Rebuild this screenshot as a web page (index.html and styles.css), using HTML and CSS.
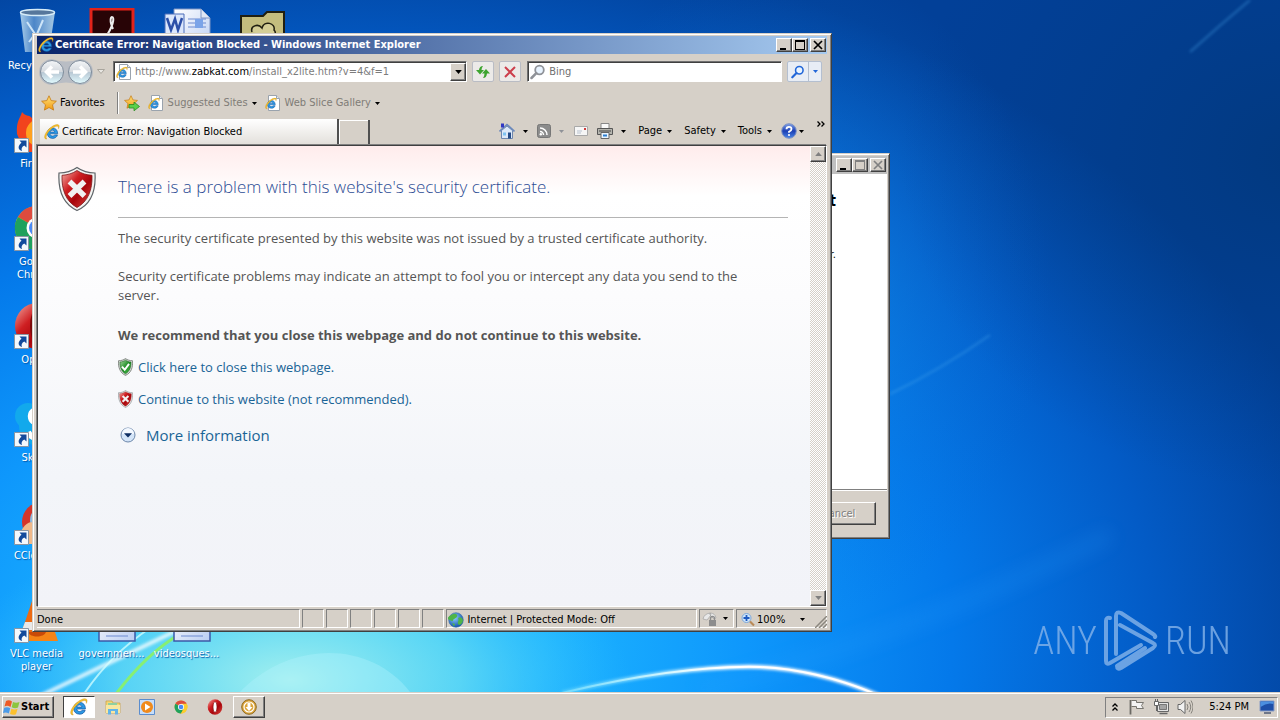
FILE: index.html
```html
<!DOCTYPE html>
<html lang="en">
<head>
<meta charset="utf-8">
<title>Certificate Error: Navigation Blocked</title>
<link rel="stylesheet" href="styles.css">
</head>
<body>
<svg class="defs" aria-hidden="true">
  <defs>
    <linearGradient id="gRed" x1="0" y1="0" x2="1" y2="1"><stop offset="0" stop-color="#f3b0a8"/><stop offset=".35" stop-color="#cf1f22"/><stop offset=".6" stop-color="#a8060c"/><stop offset="1" stop-color="#e04840"/></linearGradient>
    <linearGradient id="gGreen" x1="0" y1="0" x2="1" y2="1"><stop offset="0" stop-color="#a9dba0"/><stop offset=".5" stop-color="#1f8e28"/><stop offset="1" stop-color="#4cbf4a"/></linearGradient>
    <linearGradient id="gNav" x1="0" y1="0" x2="0" y2="1"><stop offset="0" stop-color="#f4f6f8"/><stop offset=".48" stop-color="#d5dadf"/><stop offset=".52" stop-color="#b9c8d4"/><stop offset="1" stop-color="#e2fbff"/></linearGradient>
    <linearGradient id="gBlue" x1="0" y1="0" x2="0" y2="1"><stop offset="0" stop-color="#7fa0e8"/><stop offset=".5" stop-color="#1c3fb4"/><stop offset="1" stop-color="#4b86e6"/></linearGradient>
    <linearGradient id="gStar" x1="0" y1="0" x2="0" y2="1"><stop offset="0" stop-color="#ffe27a"/><stop offset="1" stop-color="#f29a10"/></linearGradient>
    <linearGradient id="gBin" x1="0" y1="0" x2="1" y2="0"><stop offset="0" stop-color="#a9cdea"/><stop offset=".4" stop-color="#4c86c8"/><stop offset="1" stop-color="#a5c8e4"/></linearGradient>
    <linearGradient id="gDoc" x1="0" y1="0" x2="1" y2="1"><stop offset="0" stop-color="#fff"/><stop offset="1" stop-color="#b9cdf2"/></linearGradient>
    <radialGradient id="gGlobe" cx=".4" cy=".35" r=".7"><stop offset="0" stop-color="#8fd0ff"/><stop offset="1" stop-color="#0b4aa8"/></radialGradient>
  </defs>
  <symbol id="ie" viewBox="0 0 16 16">
    <path d="M13.700 9.800H6c.1 1.300 1.100 2.200 2.600 2.200 1 0 1.700-.4 2.200-1.100h2.700c-.7 2.300-2.500 3.500-4.900 3.500-3.200 0-5.300-2.100-5.300-5.200 0-3 2.200-5.300 5.200-5.300 3.200 0 5.300 2.400 5.200 5.900zM6.100 8h4.500c-.2-1.100-1-1.800-2.200-1.800S6.400 6.900 6.100 8z" fill="#2a98e4" stroke="#0c4f9c" stroke-width=".6"/>
    <path d="M3 15C.2 15.500-.2 12.500 2 8.800 4.500 4.600 9.500.9 12.800.6c2.500-.2 3 1.600 1.700 4.200.2-1.900-.4-2.800-2-2.500C9.300 2.900 5 6.600 3.100 10.200c-1.200 2.300-1.400 4.100-.1 4.800z" fill="#f6c02c" stroke="#b9820c" stroke-width=".3"/>
  </symbol>
  <symbol id="iepage" viewBox="0 0 16 16">
    <path d="M3.500.5h8l3 3v12h-11z" fill="#fff" stroke="#9aa3ad"/><path d="M11.500.5v3h3" fill="#e4e8ec" stroke="#9aa3ad"/>
    <use href="#ie" x="0" y="2.500" width="12" height="12"/>
  </symbol>
  <symbol id="shieldx" viewBox="0 0 38 46">
    <path d="M19 1.500C14 5 8 7 1 7c-1 17 4 31 18 37.500C34 38 38 24 37 7 30 7 24 5 19 1.500z" fill="#f4f4f2" stroke="#5e6468" stroke-width="1.200"/>
    <path d="M19 4.500C14.500 7.500 9.500 9 4 9.300 3.500 24 8 35.500 19 41.500 30 35.500 34.500 24 34 9.300 28.500 9 23.500 7.500 19 4.500z" fill="url(#gRed)" stroke="#7c1416" stroke-width=".8"/>
    <path d="M11.500 15.500l15 14.500M26.500 15.500l-15 14.500" stroke="#f1f1f1" stroke-width="5.500"/>
  </symbol>
  <symbol id="shieldok" viewBox="0 0 38 46">
    <path d="M19 1.500C14 5 8 7 1 7c-1 17 4 31 18 37.500C34 38 38 24 37 7 30 7 24 5 19 1.500z" fill="#d8ddd8" stroke="#6b716b" stroke-width="2"/>
    <path d="M19 5.500C14.500 8.500 10 10 5 10.300 4.500 24 9 34.500 19 40.500 29 34.500 33.500 24 33 10.300 28 10 23.500 8.500 19 5.500z" fill="url(#gGreen)" stroke="#17601d" stroke-width="1.500"/>
    <path d="M10 22l7 8 11-15" fill="none" stroke="#fff" stroke-width="5"/>
  </symbol>
  <symbol id="star" viewBox="0 0 16 16"><path d="M8 .8l2.200 4.800 5.200.6-3.900 3.600 1.100 5.300L8 12.500l-4.600 2.600 1.100-5.300L.6 6.200l5.200-.6z" fill="url(#gStar)" stroke="#c77a10" stroke-width=".8"/></symbol>
  <symbol id="down" viewBox="0 0 5 3"><path d="M0 0h5L2.500 3z" fill="currentColor"/></symbol>
  <symbol id="min" viewBox="0 0 12 10"><path d="M2 8h6v2H2z" fill="currentColor"/></symbol>
  <symbol id="max" viewBox="0 0 12 10"><path d="M1 0h10v10H1zM2 2v7h8V2z" fill="currentColor" fill-rule="evenodd"/></symbol>
  <symbol id="close" viewBox="0 0 12 10"><path d="M2 1l8 8M10 1L2 9" stroke="currentColor" stroke-width="1.700"/></symbol>
  <symbol id="chrome" viewBox="0 0 48 48">
    <circle cx="24" cy="24" r="22" fill="#f8c51c"/>
    <path d="M24 24L4.900 13A22 22 0 0 1 43.100 13z" fill="#dd4b3e"/>
    <path d="M4.900 13A22 22 0 0 0 24 46l9.500-16.500L24 24z" fill="#1fa15d"/>
    <path d="M24 13h19.100A22 22 0 0 1 24 46l9.500-16.500z" fill="#fccd2e"/>
    <circle cx="24" cy="24" r="10.500" fill="#fff"/><circle cx="24" cy="24" r="8" fill="#4a8af4"/>
  </symbol>
  <symbol id="opera" viewBox="0 0 48 48"><ellipse cx="24" cy="24" rx="22" ry="23" fill="url(#gRed)"/><ellipse cx="24" cy="24" rx="6" ry="16" fill="#fff" stroke="#7a0a0a" stroke-width="2"/></symbol>
  <symbol id="shortcut" viewBox="0 0 15 15"><path d="M.5.5h14v14H.5z" fill="#f4f8fc" stroke="#8a96a4"/><path d="M5.500 2.500h7v7L10.300 7.400C7.800 8.800 7 10.500 8 13 4.300 12 3 8.500 7.500 4.800z" fill="#124a9c"/></symbol>
  <symbol id="lens" viewBox="0 0 16 16"><circle cx="9.500" cy="6" r="4.300" fill="#e9f4ff" stroke="currentColor" stroke-width="1.800"/><path d="M6.300 9.200L1.500 14" stroke="currentColor" stroke-width="2.500" stroke-linecap="round"/></symbol>
</svg>

<main class="desktop">
  <svg class="wallpaper" viewBox="0 0 1280 692" preserveAspectRatio="none" aria-hidden="true">
    <defs>
      <radialGradient id="w0" gradientUnits="userSpaceOnUse" cx="0" cy="0" r="1" gradientTransform="translate(340 640) scale(1020 720)">
        <stop offset="0" stop-color="#2cc4fb"/><stop offset=".2" stop-color="#1cb4ff"/><stop offset=".4" stop-color="#0e97fc"/><stop offset=".6" stop-color="#0479ea"/><stop offset=".8" stop-color="#035bc6"/><stop offset="1" stop-color="#024098"/>
      </radialGradient>
      <radialGradient id="w1" gradientUnits="userSpaceOnUse" cx="0" cy="0" r="1" gradientTransform="translate(290 680) scale(340 160)"><stop offset="0" stop-color="#a4f0ee"/><stop offset=".5" stop-color="#6fe0f2" stop-opacity=".7"/><stop offset="1" stop-color="#30c0ff" stop-opacity="0"/></radialGradient>
      <radialGradient id="w2" gradientUnits="userSpaceOnUse" cx="0" cy="0" r="1" gradientTransform="translate(1300 160) scale(400 330)"><stop offset="0" stop-color="#023572" stop-opacity=".65"/><stop offset="1" stop-color="#023a80" stop-opacity="0"/></radialGradient>
      <radialGradient id="w3" gradientUnits="userSpaceOnUse" cx="0" cy="0" r="1" gradientTransform="translate(790 290) scale(260 330)"><stop offset="0" stop-color="#1894ea" stop-opacity=".6"/><stop offset="1" stop-color="#0a70d8" stop-opacity="0"/></radialGradient>
      <linearGradient id="w4"><stop offset="0" stop-color="#bff" stop-opacity=".3"/><stop offset=".5" stop-color="#fff"/><stop offset="1" stop-color="#fff"/></linearGradient>
      <filter id="soft" x="-10%" y="-30%" width="120%" height="160%"><feGaussianBlur stdDeviation="1.500"/></filter>
      <filter id="haze" x="-10%" y="-30%" width="120%" height="160%"><feGaussianBlur stdDeviation="9"/></filter>
    </defs>
    <path d="M0 0h1280v692H0z" fill="url(#w0)"/>
    <path d="M0 0h1280v692H0z" fill="url(#w3)"/>
    <path d="M0 0h1280v692H0z" fill="url(#w2)"/>
    <path d="M0 0h1280v692H0z" fill="url(#w1)"/>
    <path d="M240 692C290 640 370 640 410 692z" fill="#b5f4ff" opacity=".35"/>
    <g fill="none">
      <path d="M700 690Q900 640 1110 535" stroke="#35a5ff" stroke-width="12" opacity=".2" filter="url(#haze)"/>
      <path d="M890 394Q940 370 990 335M1190 52Q1220 25 1250 0" stroke="#4ba9ee" stroke-width="2" opacity=".4" filter="url(#soft)"/>
      <path d="M40 696L182 628" stroke="#fff" stroke-width="4" opacity=".8" filter="url(#soft)"/>
      <path d="M84 694Q110 655 150 628" stroke="#d4ffff" stroke-width="2" opacity=".75"/>
      <path d="M116 694Q146 654 180 634" stroke="#8cf265" stroke-width="3" opacity=".9"/>
      <path d="M562 693Q680 665 760 667Q820 670 880 696" stroke="url(#w4)" stroke-width="4" filter="url(#soft)"/>
      <path d="M562 693Q680 665 760 667Q820 670 880 696" stroke="url(#w4)" stroke-width="2"/>
    </g>
  </svg>

  <ul class="icons">
    <li class="shortcut c1 r1"><svg viewBox="0 0 48 48"><path d="M7 4l5 40h24l6-40z" fill="url(#gBin)"/><ellipse cx="24.500" cy="4.500" rx="17" ry="3" fill="#56779c" stroke="#d6ecf8" stroke-width="1.500"/><path d="M14 14l8 12-6 8M30 12l-6 14 8 6" stroke="#cde5f8" stroke-width="2" fill="none"/></svg><span>Recycle Bin</span></li>
    <li class="shortcut c2 r1"><svg viewBox="0 0 48 48"><path d="M3 1h42v45H3z" fill="#280406" stroke="#e2231a" stroke-width="3"/><path d="M25 21c-4-9-2-12-1-12 3 0 1 10-7 21" stroke="#eee" stroke-width="2" fill="none"/></svg></li>
    <li class="shortcut c3 r1"><svg viewBox="0 0 48 48"><path d="M11 1h27l9 9v36H11z" fill="url(#gDoc)" stroke="#7d94c4"/><path d="M38 1v9h9" fill="#dfe7f5" stroke="#7d94c4"/><path d="M25 11h18M25 15h18M25 19h18" stroke="#6c8ad0"/><path d="M32 11h8v9h-8z" fill="#7ba4e8"/><path d="M2 6h19v20H2z" fill="#dce7fb" stroke="#4a6cb8"/><path d="M4 10l4 12 4-11 3 11 4-12" fill="none" stroke="#2c4fa8" stroke-width="2.500"/></svg></li>
    <li class="shortcut c4 r1"><svg viewBox="0 0 48 48"><path d="M3 8h22l4-4h17v42H3z" fill="#c3bd7e" stroke="#201f10" stroke-width="2"/><path d="M14 24c-2-6 6-9 10-4 2-8 14-5 12 2 3 3 0 8-4 6" fill="#d4ce96" stroke="#201f10" stroke-width="1.500"/></svg></li>
    <li class="shortcut c1 r2"><svg viewBox="0 0 48 48"><path d="M4 28C3 15 7 13 9 6c4 5 6 2 10 6h25v34H12z" fill="#f2431d"/><circle cx="27" cy="27" r="14" fill="#ffa21f"/></svg><svg class="arrow"><use href="#shortcut"/></svg><span>Firefox</span></li>
    <li class="shortcut c1 r3"><svg><use href="#chrome"/></svg><svg class="arrow"><use href="#shortcut"/></svg><span>Google Chrome</span></li>
    <li class="shortcut c1 r4"><svg><use href="#opera"/></svg><svg class="arrow"><use href="#shortcut"/></svg><span>Opera</span></li>
    <li class="shortcut c1 r5"><svg viewBox="0 0 48 48"><circle cx="15" cy="16" r="13" fill="#12a9ec"/><circle cx="26" cy="26" r="20" fill="#12a9ec"/><path d="M28 10c-8-1-11 3-10 8s8 6 14 8M15 32c3 7 12 7 18 4" fill="none" stroke="#fff" stroke-width="6"/></svg><svg class="arrow"><use href="#shortcut"/></svg><span>Skype</span></li>
    <li class="shortcut c1 r6"><svg viewBox="0 0 48 48"><circle cx="29" cy="24" r="20" fill="#d4352a"/><circle cx="30" cy="22" r="13" fill="#8bbbe4"/><path d="M4 46c4-20 14-28 24-16l6 16z" fill="#f0b98a"/></svg><svg class="arrow"><use href="#shortcut"/></svg><span>CCleaner</span></li>
    <li class="shortcut c1 r7"><svg viewBox="0 0 48 48"><path d="M20 2h8l12 36H8z" fill="#ec6a12"/><path d="M12 26h24l3 8H9z" fill="#e8e8e8"/><path d="M6 36h36l3 9H3z" fill="#f58416"/><path d="M15 36c2 6 16 6 18 0z" fill="#c94a08"/></svg><svg class="arrow"><use href="#shortcut"/></svg><span>VLC media player</span></li>
    <li class="shortcut c2 r7"><svg viewBox="0 0 48 48"><path d="M11 1h36v44H11z" fill="url(#gDoc)" stroke="#3b5aa8" stroke-width="1.500"/><path d="M18 40h22" stroke="#6c8ad0"/></svg><span>governmen...</span></li>
    <li class="shortcut c3 r7"><svg viewBox="0 0 48 48"><path d="M11 1h36v44H11z" fill="url(#gDoc)" stroke="#3b5aa8" stroke-width="1.500"/><path d="M18 40h22" stroke="#6c8ad0"/></svg><span>videosques...</span></li>
  </ul>

  <div class="watermark">
    <span>ANY</span>
    <svg viewBox="0 0 56 62" aria-hidden="true"><g fill="none" stroke="#86b4ea" stroke-width="4" stroke-linejoin="round" stroke-linecap="round"><path d="M7 8Q3 7 3 11v40q0 4 4 2l31-18"/><path d="M13 44V6q0-5 5-3l32 21q3 2 2 3"/><path d="M17 15l33 18q4 2 0 5L18 58q-4 2-4-2l28-18"/></g></svg>
    <span>RUN</span>
  </div>

  <section class="window dialog" aria-label="Setup">
    <header class="titlebar idle">
      <span class="title"></span>
      <button class="cap" aria-label="Minimize"><svg><use href="#min"/></svg></button>
      <button class="cap dim" aria-label="Maximize"><svg><use href="#max"/></svg></button>
      <button class="cap gap dim" aria-label="Close"><svg><use href="#close"/></svg></button>
    </header>
    <div class="dialog-body"><strong>t</strong><span>r.</span></div>
    <footer><button class="cancel" disabled>Cancel</button></footer>
  </section>

  <section class="window browser" aria-label="Internet Explorer">
    <header class="titlebar">
      <svg class="i16"><use href="#ie"/></svg>
      <h1 class="title">Certificate Error: Navigation Blocked - Windows Internet Explorer</h1>
      <button class="cap" aria-label="Minimize"><svg><use href="#min"/></svg></button>
      <button class="cap" aria-label="Maximize"><svg><use href="#max"/></svg></button>
      <button class="cap gap" aria-label="Close"><svg><use href="#close"/></svg></button>
    </header>

    <div class="navrow">
      <svg class="backfwd" viewBox="0 0 56 28" aria-hidden="true">
        <path d="M14 1Q28 6 42 1a13 13 0 0 1 0 26Q28 22 14 27A13 13 0 0 1 14 1z" fill="#b9bdc4"/>
        <g fill="url(#gNav)" stroke="#7e8b9a"><circle cx="14" cy="14" r="11.500"/><circle cx="42" cy="14" r="11.500"/></g>
        <path d="M21 14H9M14 8.500L8.500 14l5.500 5.500M35 14h12M42 8.500l5.500 5.500-5.500 5.500" fill="none" stroke="#fff" stroke-width="3.500"/>
      </svg>
      <svg class="recent" viewBox="0 0 8 5"><path d="M.5.5h7L4 4.500z" fill="#e8e6e2" stroke="#a9a59d"/></svg>
      <div class="field address">
        <svg class="i16"><use href="#iepage"/></svg>
        <div class="url" role="textbox" aria-label="Address">http://www.<b>zabkat.com</b>/install_x2lite.htm?v=4&amp;f=1</div>
        <button class="drop" aria-label="Show addresses"><svg class="down"><use href="#down"/></svg></button>
      </div>
      <button class="tool" aria-label="Refresh"><svg viewBox="0 0 16 16"><path d="M8 2Q4.500 2 4 6H1l4 4.500L9 6H6.500Q6.500 4 8 2zM8 14q3.500 0 4-4.500h3L11 5 7 9.500h2.500Q9.500 12 8 14z" fill="#3da42f"/></svg></button>
      <button class="tool" aria-label="Stop"><svg viewBox="0 0 16 16"><path d="M3 3l10 10M13 3L3 13" stroke="#cc3f4c" stroke-width="2"/></svg></button>
      <div class="field search">
        <svg class="i16 grey"><use href="#lens"/></svg>
        <input type="text" placeholder="Bing" aria-label="Search Bing">
      </div>
      <div class="go"><button aria-label="Search"><svg class="i14"><use href="#lens"/></svg></button><button class="more" aria-label="Search options"><svg class="down"><use href="#down"/></svg></button></div>
    </div>

    <nav class="favrow">
      <button class="fav"><svg class="i16"><use href="#star"/></svg>Favorites</button>
      <span class="rule"></span>
      <button aria-label="Add to Favorites"><svg class="i16" viewBox="0 0 16 16"><use href="#star" width="14" height="14"/><path d="M5 9.500h5V7l5.500 4.500L10 15.800V13H5z" fill="#5ad04a" stroke="#2a8a22" stroke-width=".8"/></svg></button>
      <button class="faint sites"><svg class="i16"><use href="#iepage"/></svg>Suggested Sites<svg class="down"><use href="#down"/></svg></button>
      <button class="faint"><svg class="i16"><use href="#iepage"/></svg>Web Slice Gallery<svg class="down"><use href="#down"/></svg></button>
    </nav>

    <div class="tabrow">
      <button class="tab"><svg class="i16"><use href="#ie"/></svg>Certificate Error: Navigation Blocked</button>
      <button class="newtab" aria-label="New Tab"></button>
      <div class="commands">
        <button aria-label="Home"><svg class="i16" viewBox="0 0 16 16"><path d="M2.500 7.500v8h11v-8L8 3z" fill="#dce8f8" stroke="#6f87ae"/><path d="M.5 8.500L8 1.500l7.500 7" fill="none" stroke="#6b88bb" stroke-width="1.600"/><path d="M9 9.500h3v6H9z" fill="#254a86"/><path d="M4 9.500h3v3H4z" fill="#7fc2f0"/><path d="M2 .5h3v4H2z" fill="#3037c4"/></svg><svg class="down"><use href="#down"/></svg></button>
        <button class="grey" aria-label="Feeds"><svg class="i14" viewBox="0 0 14 14"><rect x=".5" y=".5" width="13" height="13" rx="2" fill="#8c8c8c" stroke="#777"/><path d="M3 7.500A3.500 3.500 0 0 1 6.500 11M3 4a7 7 0 0 1 7 7" fill="none" stroke="#fff" stroke-width="1.500"/><circle cx="3.800" cy="10.200" r="1.200" fill="#fff"/></svg><svg class="down"><use href="#down"/></svg></button>
        <button class="mail" aria-label="Read mail"><svg class="i14" viewBox="0 0 14 14"><path d="M.5 2.500h13v9H.5z" fill="#f6f6f6" stroke="#a9a9a9"/><path d="M10 4h2v2h-2z" fill="#cf3a3a"/><path d="M3 7h5M3 9h4" stroke="#b9c3d0"/></svg></button>
        <button class="print" aria-label="Print"><svg class="i16" viewBox="0 0 16 16"><path d="M4 .5h8v5H4z" fill="#fafafa" stroke="#888"/><path d="M.5 5.500h15v6H.5z" fill="#b4b4ae" stroke="#565656"/><path d="M2 8h12" stroke="#444"/><path d="M4 9.500h8v6H4z" fill="#e8f4ff" stroke="#666"/><path d="M6 12.500h4" stroke="#2c7ed0" stroke-width="2"/></svg><svg class="down"><use href="#down"/></svg></button>
        <button class="word">Page<svg class="down"><use href="#down"/></svg></button>
        <button class="word">Safety<svg class="down"><use href="#down"/></svg></button>
        <button class="word">Tools<svg class="down"><use href="#down"/></svg></button>
        <button class="help" aria-label="Help"><svg class="i16" viewBox="0 0 16 16"><circle cx="8" cy="8" r="7.300" fill="url(#gBlue)" stroke="#7f93c4"/><path d="M5.500 6.200Q5.500 3.800 8 3.800t2.500 2.200Q10.500 7.500 8 8.800v1" fill="none" stroke="#fff" stroke-width="1.800"/><circle cx="8" cy="12" r="1.100" fill="#fff"/></svg><svg class="down"><use href="#down"/></svg></button>
        <button class="chev" aria-label="More commands"><svg viewBox="0 0 8 6"><path d="M.5.500L3 3 .5 5.500M4.500.500L7 3 4.500 5.500" fill="none" stroke="#000" stroke-width="1.300"/></svg></button>
      </div>
    </div>

    <div class="viewport">
      <article class="page">
        <svg class="bigshield"><use href="#shieldx"/></svg>
        <div class="copy">
          <h2>There is a problem with this website's security certificate.</h2>
          <p>The security certificate presented by this website was not issued by a trusted certificate authority.</p>
          <p>Security certificate problems may indicate an attempt to fool you or intercept any data you send to the server.</p>
          <p class="advice">We recommend that you close this webpage and do not continue to this website.</p>
          <a class="choice" href="#"><svg><use href="#shieldok"/></svg>Click here to close this webpage.</a>
          <a class="choice" href="#"><svg><use href="#shieldx"/></svg>Continue to this website (not recommended).</a>
          <a class="choice info" href="#"><svg viewBox="0 0 16 16"><circle cx="8" cy="8" r="7" fill="#d3e4f8" stroke="#6d87aa"/><path d="M2 7a6 6 0 0 1 12 0z" fill="#f3f8ff"/><path d="M4 6.200h8L8 10.500z" fill="#0c2c62"/></svg>More information</a>
        </div>
      </article>
      <div class="scrollbar" aria-hidden="true">
        <button tabindex="-1"><svg class="down up"><use href="#down"/></svg></button>
        <button tabindex="-1"><svg class="down"><use href="#down"/></svg></button>
      </div>
    </div>

    <footer class="status">
      <span class="cell done">Done</span>
      <span class="cell slot"></span><span class="cell slot"></span><span class="cell slot"></span><span class="cell slot"></span><span class="cell slot"></span><span class="cell slot"></span>
      <span class="cell zone"><svg class="i16" viewBox="0 0 16 16"><circle cx="8" cy="8" r="7.300" fill="url(#gGlobe)" stroke="#3d6fa8" stroke-width=".6"/><path d="M4 2.500Q8 1 9 3T7 6.500 5 9 1.500 8 4 2.500zM10 6q3-2 4.500 1T12 13Q9 13 10 10T10 6zM4 11l3 1-1 2.500z" fill="#4fb548"/></svg>Internet | Protected Mode: Off</span>
      <span class="cell lock"><svg class="i16" viewBox="0 0 16 16"><path d="M1 8Q2 3 8 2l1 2-4 5zM8 2q5 0 6 5l-2 1-4-4z" fill="#e8e8e8" stroke="#999" stroke-width=".6"/><path d="M7 9h7v6H7z" fill="#8d8d8d"/><path d="M8.500 9V7.500a2 2 0 0 1 4 0V9" fill="none" stroke="#8d8d8d" stroke-width="1.300"/></svg><svg class="down"><use href="#down"/></svg></span>
      <button class="cell zoom"><svg class="i14" viewBox="0 0 14 14"><circle cx="5.500" cy="5" r="4.500" fill="#cfe6fb" stroke="#7da7d8"/><path d="M5.500 2v6M2.500 5h6" stroke="#1f5ac0" stroke-width="1.800"/><path d="M9 8.500l4 4" stroke="#b98a58" stroke-width="2.200"/></svg>100%<svg class="down"><use href="#down"/></svg></button>
      <svg class="grip" viewBox="0 0 12 12"><path d="M0 12L12 0M4 12l8-8M8 12l4-4" stroke="#8a867e" stroke-width="1.500"/></svg>
    </footer>
  </section>
</main>

<footer class="taskbar">
  <button class="start"><svg class="i18" viewBox="0 0 18 16"><path d="M3 2q3-1.500 6 .5L7.500 8Q4.500 6 1.500 7.500z" fill="#ee5a24"/><path d="M10 3q3 1.500 6.500 0L15 8.500q-3 1.500-6.300-.2z" fill="#8cc63e"/><path d="M1.200 8.800q3-1.500 6 .4L5.800 14.500Q3 12.700 0 14z" fill="#4b9be8"/><path d="M8.400 9.700q3 1.500 6.200 0L13 15.200q-3 1.300-6-.2z" fill="#fcc12d"/></svg>Start</button>
  <div class="tasks">
    <button class="task active" aria-label="Internet Explorer"><svg class="i18"><use href="#ie"/></svg></button>
    <button class="task" aria-label="Explorer"><svg class="i16" viewBox="0 0 16 16"><path d="M1 2h6l1 2h7v10H1z" fill="#f3d675" stroke="#c79f3c" stroke-width=".7"/><path d="M3 4h9v3H3z" fill="#8fd0a0"/><path d="M1 6h14v8H1z" fill="#f8e7a0"/><path d="M3 15.500V10h10v5.500h-3V12H6v3.500z" fill="#62b4e8"/></svg></button>
    <button class="task" aria-label="Media Player"><svg class="i16" viewBox="0 0 16 16"><path d="M.5.500h15v15H.5z" fill="#c7defa" stroke="#5b8dce"/><circle cx="8" cy="8" r="6" fill="#f08a1c"/><path d="M6 4.500L11.500 8 6 11.500z" fill="#fff"/></svg></button>
    <button class="task" aria-label="Chrome"><svg class="i14"><use href="#chrome"/></svg></button>
    <button class="task" aria-label="Opera"><svg class="i16"><use href="#opera"/></svg></button>
    <button class="task raised" aria-label="Installer"><svg class="i16" viewBox="0 0 16 16"><circle cx="8" cy="8" r="7.300" fill="#dca53a" stroke="#8f6a20"/><circle cx="8" cy="8" r="5" fill="none" stroke="#fff" stroke-width="1.200"/><path d="M6.500 4h3v4h2L8 12 4.500 8h2z" fill="#fff"/></svg></button>
  </div>
  <div class="tray">
    <svg class="hide" viewBox="0 0 6 8"><path d="M.5 3.500L3 1l2.500 2.500M.5 7.500L3 5l2.500 2.500" fill="none" stroke="#000" stroke-width="1.300"/></svg>
    <svg class="i16" viewBox="0 0 16 16"><path d="M2.500 1.500h5v2h7l-2 3 2 3H7.500v-2h-5" fill="#f4f4f4" stroke="#77756f"/><path d="M1.500 1v14.500" stroke="#6b6964" stroke-width="1.800"/></svg>
    <svg class="i16" viewBox="0 0 16 16"><path d="M4.500 3.500h11v9h-11z" fill="#e4e4e4" stroke="#666"/><path d="M6.500 5.500h7v5h-7z" fill="#a4a4a4" stroke="#777"/><path d="M6.500 14.500h8" stroke="#666" stroke-width="1.500"/><path d="M1.500 2.500h4v4h-4zM2.500 0v2M4.500 0v2M3.500 7v5" fill="#fff" stroke="#666"/></svg>
    <svg class="i16" viewBox="0 0 16 16"><path d="M1 5.500h2.500L8 1.500v13l-4.500-4H1z" fill="#f2f2f2" stroke="#666"/><path d="M10 5q2 3 0 6M12 3q3.500 5 0 10M14 1.500q4 6.500 0 13" fill="none" stroke="#85827c"/></svg>
    <time>5:24 PM</time>
    <svg class="i16" viewBox="0 0 16 16"><path d="M1 2h14v10H1z" fill="#1d4fa8" stroke="#8a9cc4"/><path d="M1.500 8Q8 3 14.500 5V2.500h-13z" fill="#4b8fe0"/><path d="M5 14h7" stroke="#4d5a74" stroke-width="1.500"/></svg>
  </div>
</footer>
</body>
</html>
```
FILE: styles.css
```css
* { box-sizing: border-box; }
html, body { height: 100%; margin: 0; }
body {
  display: flex;
  flex-direction: column;
  overflow: hidden;
  font: 11px/14px "DejaVu Sans Condensed", "DejaVu Sans", sans-serif;
  color: #000;
  background: #0a6cd0;
}
button, input { font: inherit; color: inherit; }
button { display: flex; align-items: center; padding: 0; border: 0; background: none; white-space: nowrap; }
svg { display: block; flex: none; }
h1, h2, p, ul { margin: 0; padding: 0; }
.defs { position: absolute; width: 0; height: 0; }
.i14 { width: 14px; height: 14px; }
.i16 { width: 16px; height: 16px; }
.i18 { width: 18px; height: 18px; }
.down { width: 5px; height: 3px; }
.up { transform: rotate(180deg); }
.grey { color: #8f9298; }

/* Desktop */
.desktop { position: relative; flex: 1; min-height: 0; overflow: hidden; }
.wallpaper { position: absolute; inset: 0; width: 100%; height: 100%; }
.icons {
  position: absolute;
  top: 8px;
  left: -1px;
  display: grid;
  grid-template-columns: repeat(4, 75px);
  grid-template-rows: repeat(7, 98px);
  list-style: none;
  color: #fff;
}
.shortcut { position: relative; display: flex; flex-direction: column; align-items: center; gap: 3px; text-align: center; line-height: 13px; text-shadow: 1px 1px 1px #0457a8; }
.shortcut > svg { width: 48px; height: 48px; }
.shortcut > .arrow { position: absolute; left: 15px; top: 32px; width: 15px; height: 15px; }
.c1 { grid-column: 1; } .c2 { grid-column: 2; } .c3 { grid-column: 3; } .c4 { grid-column: 4; }
.r1 { grid-row: 1; } .r2 { grid-row: 2; } .r3 { grid-row: 3; } .r4 { grid-row: 4; }
.r5 { grid-row: 5; } .r6 { grid-row: 6; } .r7 { grid-row: 7; }
.shortcut span { max-width: 70px; }

.watermark {
  position: absolute;
  right: 49px;
  bottom: 20px;
  display: flex;
  align-items: center;
  gap: 6px;
  font: 300 38px/62px "Roboto Condensed", Roboto, sans-serif;
  color: #86b4ea;
  opacity: .8;
}
.watermark svg { width: 56px; height: 62px; }

/* Windows */
.window {
  position: absolute;
  display: flex;
  flex-direction: column;
  padding: 2px;
  background: #d6d0c8;
  border: 1px solid;
  border-color: #d6d0c8 #404040 #404040 #d6d0c8;
  box-shadow: inset 1px 1px #fff, inset -1px -1px #808080;
}
.titlebar { display: flex; align-items: center; height: 18px; padding: 0 1px; color: #fff; background: linear-gradient(90deg, #0a246a, #a6caf0); }
.titlebar.idle { background: #c0c0c0; }
.title { flex: 1; margin-left: 1px; font: bold 11px/18px "DejaVu Sans Condensed", sans-serif; white-space: nowrap; overflow: hidden; }
.cap {
  justify-content: center;
  width: 16px;
  height: 14px;
  color: #000;
  background: #d6d0c8;
  border: 1px solid;
  border-color: #fff #404040 #404040 #fff;
  box-shadow: inset -1px -1px #808080;
}
.cap svg { width: 12px; height: 10px; }
.cap.gap { margin-left: 2px; }
.cap.dim { color: #808080; }

.dialog { left: 480px; top: 153px; width: 410px; height: 386px; }
.dialog-body { flex: 1; display: flex; flex-direction: column; align-items: flex-end; gap: 38px; padding: 18px 51px; background: #fff; border-bottom: 1px solid #808080; }
.dialog-body strong { font-size: 15px; line-height: 18px; }
.dialog footer { display: flex; justify-content: flex-end; padding: 11px 11px; height: 46px; border-top: 1px solid #fff; }
.cancel { justify-content: center; width: 75px; height: 23px; color: #808080; text-shadow: 1px 1px #fff; border: 1px solid; border-color: #fff #404040 #404040 #fff; box-shadow: inset -1px -1px #808080; }

.browser { left: 32px; top: 33px; width: 800px; height: 599px; padding: 2px 4px; }

.navrow { display: flex; align-items: center; height: 34px; padding: 1px 5px 0 1px; }
.backfwd { width: 56px; height: 28px; }
.recent { width: 8px; height: 5px; margin: 0 8px 0 3px; }
.field { display: flex; align-items: center; height: 21px; background: #fff; border: 1px solid; border-color: #707070 #fff #fff #707070; box-shadow: inset 1px 1px #404040; }
.address { flex: 356; padding-left: 2px; }
.url { flex: 1; margin-left: 3px; color: #7c7c7c; white-space: nowrap; overflow: hidden; }
.url b { font-weight: normal; color: #000; }
.drop { justify-content: center; width: 16px; height: 18px; margin-top: 1px; background: #d6d0c8; border: 1px solid; border-color: #fff #404040 #404040 #fff; box-shadow: inset -1px -1px #808080; }
.drop .down, .scrollbar .down { width: 7px; height: 4px; }
.tool { justify-content: center; width: 22px; height: 21px; margin-left: 5px; background: #eceae8; border: 1px solid #b9bcc4; border-radius: 2px; }
.tool svg { width: 16px; height: 16px; }
.search { flex: 255; margin-left: 6px; padding-left: 2px; }
.search input { flex: 1; min-width: 0; margin-left: 3px; padding: 0; border: 0; outline: 0; background: none; }
.search input::placeholder { color: #707070; opacity: 1; }
.go { display: flex; width: 35px; height: 21px; margin-left: 5px; color: #2166d8; background: #e8edf5; border: 1px solid #b4bfd0; border-radius: 2px; }
.go button { flex: 1; justify-content: center; }
.go .more { flex: none; width: 13px; border-left: 1px solid #b4bfd0; }

.favrow { display: flex; align-items: center; height: 30px; padding-left: 4px; }
.fav { gap: 3px; margin-right: 12px; }
.rule { width: 2px; height: 22px; margin-right: 5px; border-left: 1px solid #808080; border-right: 1px solid #fff; }
.faint { gap: 4px; margin-left: 8px; color: #7f7c77; }
.faint .down { color: #000; }

.tabrow { display: flex; align-items: flex-end; height: 27px; padding: 0 2px 0 3px; }
.tab { width: 299px; height: 26px; padding-left: 4px; gap: 2px; background: linear-gradient(#fff, #e2dfda); border-right: 2px solid #505050; }
.newtab { width: 31px; height: 25px; border: solid #505050; border-width: 0 2px 0 0; box-shadow: inset 1px 1px #fff; }
.commands { flex: 1; display: flex; align-items: center; justify-content: flex-end; height: 27px; padding-bottom: 1px; }
.commands button { gap: 8px; margin-left: 9px; }
.commands button.mail { margin-left: 10px; }
.commands button.word { gap: 5px; margin-left: 12px; }
.commands button.help { gap: 2px; margin-left: 9px; }
.commands button.chev { align-self: flex-start; margin: 3px 0 0 13px; }
.chev svg { width: 8px; height: 6px; }

.viewport { flex: 1; display: flex; min-height: 0; border: 1px solid; border-color: #404040 #fff #fff #404040; box-shadow: -1px -1px #808080; }
.page {
  flex: 1;
  display: flex;
  align-items: flex-start;
  gap: 22px;
  padding: 19px 22px 0 20px;
  font: 13px/19px "Open Sans", "Noto Sans", sans-serif;
  color: #555;
  background: linear-gradient(#ffecec, #fff 50px, #fcfcfd 150px, #f3f5f9 330px, #f2f3f8);
}
.bigshield { width: 38px; height: 48px; }
.copy { flex: 1; }
.copy h2 { margin-bottom: 11px; padding: 10px 0 18px; font: 300 17px/24px "Open Sans", sans-serif; color: #2c4c94; border-bottom: 1px solid #b4b4b4; }
.copy p { max-width: 650px; margin-bottom: 19px; }
.copy .advice { margin: 0 0 12px; font-weight: bold; padding-top: 2px; }
.choice { display: flex; align-items: center; gap: 5px; margin-bottom: 12px; line-height: 20px; color: #1a6496; text-decoration: none; }
.choice svg { width: 15px; height: 18px; }
.info { gap: 10px; margin: 16px 0 0 2px; font-size: 15px; }
.info svg { width: 16px; height: 16px; }
.scrollbar { display: flex; flex-direction: column; justify-content: space-between; width: 16px; background: repeating-conic-gradient(#d6d0c8 0 25%, #fff 0 50%) 0 0 / 2px 2px; }
.scrollbar button { justify-content: center; height: 16px; color: #808080; background: #d6d0c8; border: 1px solid; border-color: #fff #404040 #404040 #fff; box-shadow: inset -1px -1px #808080; }

.status { position: relative; display: flex; gap: 2px; height: 22px; padding: 2px 0 1px; }
.cell { display: flex; align-items: center; height: 19px; padding-top: 2px; border: 1px solid; border-color: #808080 #fff #fff #808080; white-space: nowrap; }
.done { flex: 266; border-left: 0; }
.slot { width: 22px; }
.zone { flex: 251; gap: 3px; padding-left: 1px; }
.lock { width: 35px; padding: 0 2px; gap: 5px; }
.zoom { width: 91px; padding: 2px 0 0 4px; gap: 2px; }
.zoom .down { margin-left: 13px; }
.grip { position: absolute; right: 0; bottom: 1px; width: 12px; height: 12px; }

/* Taskbar */
.taskbar { display: flex; align-items: center; height: 28px; padding: 2px 2px 1px; background: #d6d0c8; border-top: 1px solid #d6d0c8; box-shadow: inset 0 1px #fff; }
.start, .raised { border: 1px solid; border-color: #fff #404040 #404040 #fff; box-shadow: inset -1px -1px #808080; }
.start { width: 52px; height: 22px; gap: 0; font-weight: bold; }
.tasks { flex: 1; display: flex; gap: 2px; margin-left: 9px; }
.task { justify-content: center; width: 32px; height: 22px; }
.task.active { background: #fff; border: 1px solid; border-color: #404040 #fff #fff #404040; }
.tray { display: flex; align-items: center; gap: 8px; height: 21px; padding: 0 2px 0 6px; border: 1px solid; border-color: #808080 #fff #fff #808080; }
.hide { width: 6px; height: 8px; margin-right: 3px; }
.tray time { margin: 0 2px 0 8px; }
```
